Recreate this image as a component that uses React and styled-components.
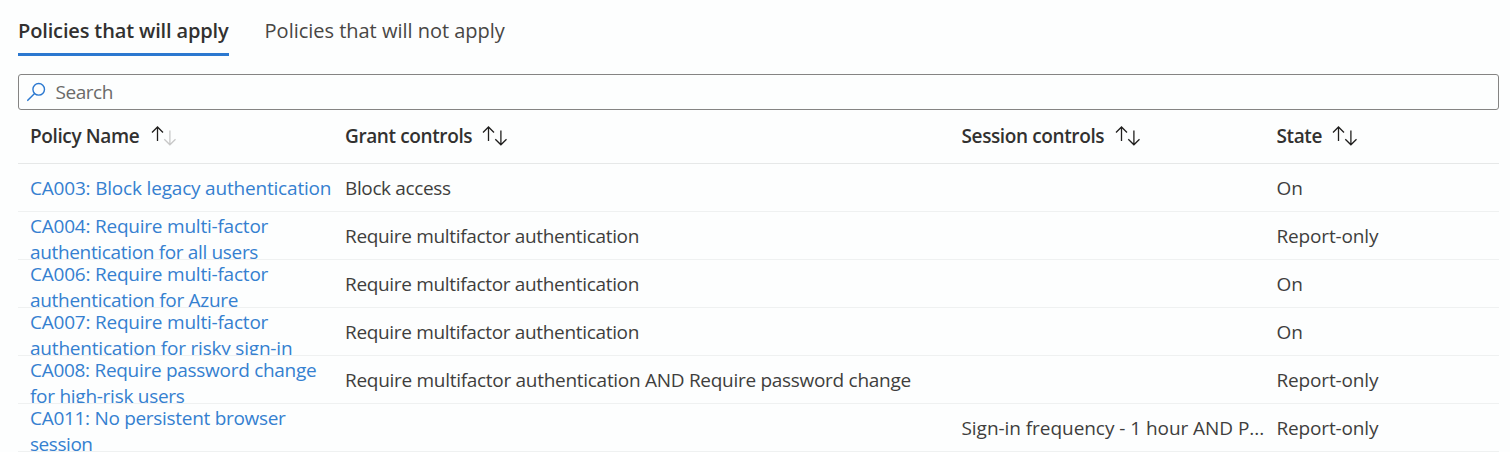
import React from "react";
import styled, { createGlobalStyle, css } from "styled-components";

const GlobalStyle = createGlobalStyle`
  * { box-sizing: border-box; }
  body {
    margin: 0;
    background: #fdfefe;
    color: #3f3e3d;
    font-family: "Open Sans", "Noto Sans", sans-serif;
    font-size: 19px;
    font-weight: 370;
    line-height: 26px;
    overflow: hidden;
  }
`;

const Page = styled.main`
  height: 452px;
  padding: 17px 11px 0 18px;
  overflow: hidden;
`;

const TabList = styled.div`
  display: flex;
  gap: 36px;
  height: 39px;
`;

const Tab = styled.button`
  height: 39px;
  padding: 0 0 8px;
  border: 0;
  border-bottom: 3px solid ${(p) => (p.$active ? "#2b78d0" : "transparent")};
  background: none;
  color: ${(p) => (p.$active ? "#323130" : "#484644")};
  font: inherit;
  font-size: 20px;
  font-weight: ${(p) => (p.$active ? 600 : 370)};
  letter-spacing: ${(p) => (p.$active ? "-0.14px" : "-0.02px")};
  white-space: nowrap;
`;

const SearchBox = styled.label`
  display: flex;
  align-items: center;
  gap: 8.5px;
  height: 36px;
  margin-top: 18px;
  padding-left: 8px;
  border: 1px solid #858483;
  border-radius: 3px;
  color: #6b6a69;
  letter-spacing: -0.45px;
`;

const Table = styled.div`
  display: flex;
  flex-direction: column;
`;

const rowGrid = css`
  display: grid;
  grid-template-columns: 315px 616.5px 315px 1fr;
  padding-left: 12px;
`;

const HeaderRow = styled.div`
  ${rowGrid}
  height: 54px;
  padding-bottom: 2px;
  align-items: center;
  border-bottom: 1px solid #e6e8e8;
`;

const HeaderCell = styled.div`
  display: flex;
  align-items: center;
  gap: ${(p) => p.$gap}px;
  color: #323130;
  font-weight: 600;
  letter-spacing: -0.38px;
`;

const Row = styled.div`
  ${rowGrid}
  height: 48px;
  border-bottom: 1px solid #eff1f1;
`;

const NameCell = styled.div`
  height: 47px;
  padding: ${(p) => (p.$single ? "11px" : "1px")} 0 0;
  overflow: hidden;
`;

const PolicyLink = styled.a`
  display: block;
  color: #3580d0;
  white-space: nowrap;
`;

const Line = styled.span`
  display: block;
  letter-spacing: ${(p) => p.$tracking}px;
`;

const Cell = styled.div`
  padding: 11px 0 0;
  overflow: hidden;
  letter-spacing: ${(p) => p.$tracking}px;
  white-space: nowrap;
`;

const SortSvg = styled.svg`
  display: block;
  flex: none;
`;

function SortIcon({ ascending }) {
  return (
    <SortSvg width="25" height="20" viewBox="0 0 25 20" fill="none" strokeWidth="1.3">
      <path d="M6.5 15V1M1 6.5L6.5 1L12 6.5" stroke="#201f1e" />
      <path d="M18.9 4.5V18.8M13.3 13.2L18.9 18.8L24.5 13.2" stroke={ascending ? "#c8c8c8" : "#201f1e"} />
    </SortSvg>
  );
}

function SearchIcon() {
  return (
    <svg width="20" height="20" viewBox="0 0 20 20" fill="none" stroke="#2b78d0" strokeWidth="1.4">
      <circle cx="11.7" cy="7.3" r="5.8" />
      <path d="M7.6 11.4L.3 18.7" />
    </svg>
  );
}

const columns = [
  { label: "Policy Name", gap: 12 },
  { label: "Grant controls", gap: 10 },
  { label: "Session controls", gap: 10.5 },
  { label: "State", gap: 9.8 },
];

const MFA = "Require multifactor authentication";

// Each text is paired with its letter spacing in pixels.
const policies = [
  { name: [["CA003: Block legacy authentication", -0.19]], grant: ["Block access", -0.37], state: "On" },
  { name: [["CA004: Require multi-factor", -0.22], ["authentication for all users", -0.34]], grant: [MFA, -0.33], state: "Report-only" },
  { name: [["CA006: Require multi-factor", -0.22], ["authentication for Azure", -0.3]], grant: [MFA, -0.33], state: "On" },
  { name: [["CA007: Require multi-factor", -0.22], ["authentication for risky sign-in", -0.2]], grant: [MFA, -0.33], state: "On" },
  { name: [["CA008: Require password change", -0.29], ["for high-risk users", -0.27]], grant: [`${MFA} AND Require password change`, -0.29], state: "Report-only" },
  { name: [["CA011: No persistent browser", -0.3], ["session", -0.45]], session: ["Sign-in frequency - 1 hour AND P...", -0.05], state: "Report-only" },
];

export default function App() {
  return (
    <Page>
      <GlobalStyle />
      <TabList>
        <Tab $active>Policies that will apply</Tab>
        <Tab>Policies that will not apply</Tab>
      </TabList>
      <SearchBox>
        <SearchIcon />
        <span>Search</span>
      </SearchBox>
      <Table>
        <HeaderRow>
          {columns.map((c, i) => (
            <HeaderCell key={c.label} $gap={c.gap}>
              {c.label}
              <SortIcon ascending={i === 0} />
            </HeaderCell>
          ))}
        </HeaderRow>
        {policies.map(({ name, grant = ["", 0], session = ["", 0], state }) => (
          <Row key={name[0][0]}>
            <NameCell $single={name.length === 1}>
              <PolicyLink>
                {name.map(([text, tracking]) => (
                  <Line key={text} $tracking={tracking}>{text}</Line>
                ))}
              </PolicyLink>
            </NameCell>
            <Cell $tracking={grant[1]}>{grant[0]}</Cell>
            <Cell $tracking={session[1]}>{session[0]}</Cell>
            <Cell $tracking={-0.15}>{state}</Cell>
          </Row>
        ))}
      </Table>
    </Page>
  );
}
